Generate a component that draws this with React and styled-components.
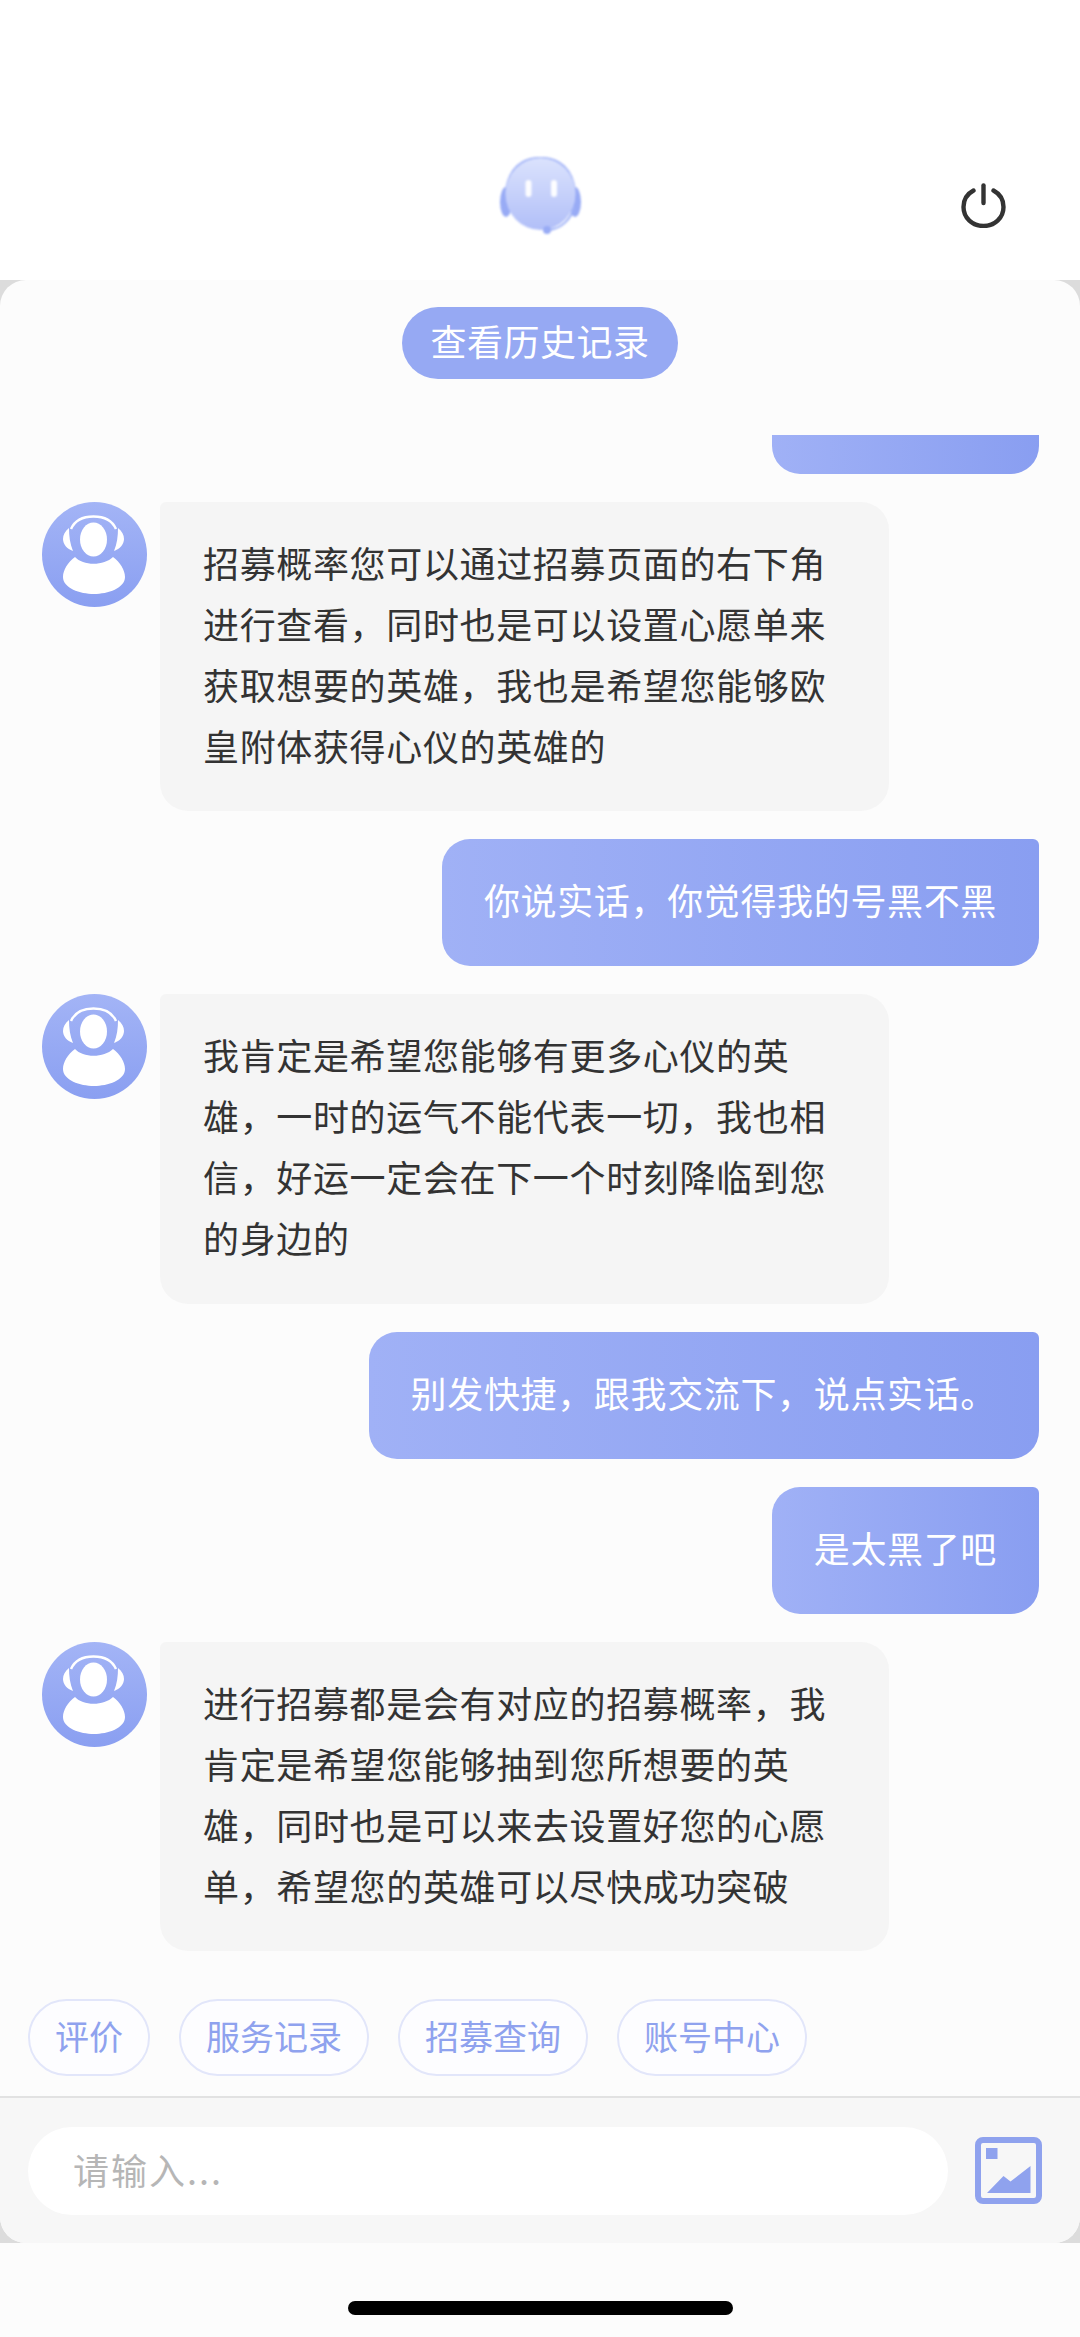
import React from 'react';
import styled, { createGlobalStyle } from 'styled-components';

const GlobalStyle = createGlobalStyle`
  html, body {
    margin: 0;
    padding: 0;
    background: #fcfcfc;
  }
  * {
    box-sizing: border-box;
  }
`;

const Page = styled.div`
  width: 1080px;
  height: 2337px;
  display: flex;
  flex-direction: column;
  overflow: hidden;
  background: #fcfcfc;
  font-family: 'Noto Sans CJK SC', 'Noto Sans', sans-serif;
  letter-spacing: 0.65px;
`;

const Header = styled.header`
  position: relative;
  height: 280px;
  flex: none;
  background: #fff;
  display: flex;
  align-items: flex-start;
  justify-content: center;
  padding-top: 157px;
`;

const PowerButton = styled.div`
  position: absolute;
  left: 961px;
  top: 183px;
  width: 45px;
  height: 45px;
`;

const PanelBackdrop = styled.div`
  flex: none;
  height: 1963px;
  background: #dcdcdc;
`;

const Panel = styled.section`
  height: 100%;
  display: flex;
  flex-direction: column;
  background: #fcfcfc;
  border-radius: 26px;
  overflow: hidden;
`;

const HistoryRow = styled.div`
  flex: none;
  display: flex;
  justify-content: center;
  padding-top: 27px;
  margin-bottom: 56px;
`;

const HistoryButton = styled.div`
  height: 72px;
  line-height: 67px;
  padding: 0 28px;
  border-radius: 36px;
  background: #96a9f3;
  color: #fff;
  font-size: 36px;
  letter-spacing: 0.5px;
`;

const MessageList = styled.div`
  flex: 1;
  min-height: 0;
  display: flex;
  flex-direction: column;
  justify-content: flex-end;
  gap: 28px;
  overflow: hidden;
  margin-bottom: 48px;
`;

const AgentRow = styled.div`
  flex: none;
  display: flex;
  align-items: flex-start;
  gap: 13px;
  padding-left: 42px;
`;

const Avatar = styled.div`
  flex: none;
  width: 105px;
  height: 105px;
`;

const AgentBubble = styled.div`
  width: 729px;
  padding: 30px 43px 35.5px;
  background: #f5f5f5;
  border-radius: 6px 28px 28px 28px;
  color: #333;
  font-size: 36px;
  line-height: 61px;
`;

const UserRow = styled.div`
  flex: none;
  display: flex;
  justify-content: flex-end;
  padding-right: 41px;
`;

const UserBubble = styled.div`
  padding: 30px 42px 36px;
  background: linear-gradient(to right, #a0b1f6, #899ef1);
  border-radius: 28px 6px 28px 28px;
  color: #fff;
  font-size: 36px;
  line-height: 61px;
`;

const ChipRow = styled.div`
  flex: none;
  display: flex;
  gap: 29px;
  padding: 0 28px 20px;
  border-bottom: 2px solid #e2e2e2;
`;

const Chip = styled.div`
  height: 77px;
  line-height: 69px;
  padding: 0 25px;
  border: 2px solid #e2e6fa;
  border-radius: 39px;
  background: #fdfdff;
  color: #8fa2ee;
  font-size: 34px;
  letter-spacing: 0;
`;

const InputBar = styled.div`
  flex: none;
  height: 145px;
  display: flex;
  align-items: center;
  gap: 27px;
  padding: 0 38px 0 28px;
  background: #f7f7f7;
`;

const InputBox = styled.div`
  flex: none;
  width: 920px;
  height: 88px;
  line-height: 84px;
  padding-left: 45px;
  border-radius: 44px;
  background: #fff;
  color: #b6b6b6;
  font-size: 36px;
  letter-spacing: 2px;
`;

const ImageButton = styled.div`
  flex: none;
  width: 67px;
  height: 67px;
`;

const Footer = styled.div`
  flex: 1;
  display: flex;
  justify-content: center;
  padding-top: 58px;
`;

const HomeBar = styled.div`
  width: 385px;
  height: 14px;
  border-radius: 7px;
  background: #000;
`;

const LogoSvg = () => (
  <svg width="81" height="78" viewBox="0 0 81 78" style={{ filter: 'blur(0.8px)' }}>
    <defs>
      <linearGradient id="logoHead" x1="0" y1="0" x2="0" y2="1">
        <stop offset="0" stopColor="#dbe3fd" />
        <stop offset="1" stopColor="#b1bff8" />
      </linearGradient>
    </defs>
    <ellipse cx="6" cy="45" rx="6" ry="15" fill="#98abf5" />
    <ellipse cx="75" cy="45" rx="6" ry="15" fill="#98abf5" />
    <path d="M6 36 C8 12 22 1 40.5 1 C59 1 73 12 75 36" fill="none" stroke="#a3b4f7" strokeWidth="2.5" />
    <ellipse cx="40.5" cy="37" rx="35" ry="36" fill="url(#logoHead)" />
    <rect x="25.5" y="23" width="6" height="17" rx="3" fill="#fff" opacity="0.95" />
    <rect x="51" y="23" width="6" height="17" rx="3" fill="#fff" opacity="0.95" />
    <path d="M74 50 C71 63 61 71 50 73" fill="none" stroke="#9db0f6" strokeWidth="2" />
    <circle cx="47" cy="73" r="4" fill="#98abf5" />
  </svg>
);

const PowerIcon = () => (
  <svg width="45" height="45" viewBox="0 0 45 45" fill="none" stroke="#333" strokeWidth="4.4" strokeLinecap="round">
    <path d="M22.5 2.5 V20" />
    <path d="M12.5 7.5 C6 11 2.5 17 2.5 24 C2.5 35 11.5 43 22.5 43 C33.5 43 42.5 35 42.5 24 C42.5 17 39 11 32.5 7.5" />
  </svg>
);

const AgentAvatar = ({ id }) => (
  <svg width="105" height="105" viewBox="0 0 105 105">
    <defs>
      <linearGradient id={id} x1="0" y1="0" x2="0" y2="1">
        <stop offset="0" stopColor="#a3b4f6" />
        <stop offset="1" stopColor="#8a9ff1" />
      </linearGradient>
    </defs>
    <circle cx="52.5" cy="52.5" r="52.5" fill={`url(#${id})`} />
    <ellipse cx="51.5" cy="37.5" rx="13.5" ry="17" fill="#fff" />
    <path d="M29 27 C33 18 41 14.5 51.5 14.5 C62 14.5 70 18 74 27" fill="none" stroke="#fff" strokeWidth="2.5" />
    <path d="M27 26 C23 29 21 33 21 37 C21 42 25 47 31 49 C28 42 27 34 27 26 Z" fill="#fff" />
    <path d="M76 26 C80 29 82 33 82 37 C82 42 78 47 72 49 C75 42 76 34 76 26 Z" fill="#fff" />
    <path d="M33 55 C41 64 62 64 71 55 C78 60 83 68 83 75 C83 86 66 92 52 92 C38 92 21 86 21 75 C21 68 26 60 33 55 Z" fill="#fff" />
  </svg>
);

const ImageIcon = () => (
  <svg width="67" height="67" viewBox="0 0 67 67">
    <rect x="3" y="3" width="61" height="61" rx="5" fill="none" stroke="#8fa2ee" strokeWidth="6" />
    <rect x="11" y="11" width="11.5" height="11" fill="#8fa2ee" />
    <path d="M12 56 L28.5 39 L35.5 44.5 L55.5 29 V56 Z" fill="#8fa2ee" />
  </svg>
);

const messages = [
  { from: 'user', text: '是太黑了吧' },
  {
    from: 'agent',
    text: '招募概率您可以通过招募页面的右下角进行查看，同时也是可以设置心愿单来获取想要的英雄，我也是希望您能够欧皇附体获得心仪的英雄的',
  },
  { from: 'user', text: '你说实话，你觉得我的号黑不黑' },
  {
    from: 'agent',
    text: '我肯定是希望您能够有更多心仪的英雄，一时的运气不能代表一切，我也相信，好运一定会在下一个时刻降临到您的身边的',
  },
  { from: 'user', text: '别发快捷，跟我交流下，说点实话。' },
  { from: 'user', text: '是太黑了吧' },
  {
    from: 'agent',
    text: '进行招募都是会有对应的招募概率，我肯定是希望您能够抽到您所想要的英雄，同时也是可以来去设置好您的心愿单，希望您的英雄可以尽快成功突破',
  },
];

const quickActions = ['评价', '服务记录', '招募查询', '账号中心'];

function App() {
  return (
    <Page>
      <GlobalStyle />
      <Header>
        <LogoSvg />
        <PowerButton>
          <PowerIcon />
        </PowerButton>
      </Header>

      <PanelBackdrop>
        <Panel>
          <HistoryRow>
            <HistoryButton>查看历史记录</HistoryButton>
          </HistoryRow>

          <MessageList>
            {messages.map((msg, i) =>
              msg.from === 'agent' ? (
                <AgentRow key={i}>
                  <Avatar>
                    <AgentAvatar id={`avatarFill${i}`} />
                  </Avatar>
                  <AgentBubble>{msg.text}</AgentBubble>
                </AgentRow>
              ) : (
                <UserRow key={i}>
                  <UserBubble>{msg.text}</UserBubble>
                </UserRow>
              )
            )}
          </MessageList>

          <ChipRow>
            {quickActions.map((label) => (
              <Chip key={label}>{label}</Chip>
            ))}
          </ChipRow>

          <InputBar>
            <InputBox>请输入...</InputBox>
            <ImageButton>
              <ImageIcon />
            </ImageButton>
          </InputBar>
        </Panel>
      </PanelBackdrop>

      <Footer>
        <HomeBar />
      </Footer>
    </Page>
  );
}

export default App;
